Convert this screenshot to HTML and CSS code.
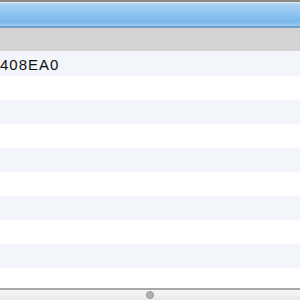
FILE: index.html
```html
<!DOCTYPE html>
<html lang="en">
<head>
    <meta charset="UTF-8">
    <title>Memory View</title>
    <link rel="stylesheet" href="styles.css">
</head>
<body>
    <div class="window">
        <div class="titlebar"></div>
        <div class="column-header"></div>
        <div class="rows">
            <div class="row"><span class="cell">408EA0</span></div>
            <div class="row"></div>
            <div class="row"></div>
            <div class="row"></div>
            <div class="row"></div>
            <div class="row"></div>
            <div class="row"></div>
            <div class="row"></div>
            <div class="row"></div>
            <div class="row"></div>
        </div>
        <div class="scrollbar">
            <span class="knob"></span>
        </div>
    </div>
</body>
</html>
```

FILE: styles.css
```css
body {
  margin: 0;
  font-family: "Liberation Sans", Arial, sans-serif;
  background: #ffffff;
}
.window {
  width: 300px;
  height: 300px;
  display: flex;
  flex-direction: column;
  overflow: hidden;
}
.titlebar {
  height: 24px;
  flex: none;
  border-top: 2px solid #8a8a8a;
  border-bottom: 2px solid #6f9fc8;
  background: linear-gradient(#c8dff3 0, #a9d0f3 3px, #8cc2f0 12px, #7db9ec 20px, #9ccaf0 24px);
  box-shadow: inset 0 1px 0 #e4e4e4;
}
.column-header {
  height: 23px;
  flex: none;
  background: #d3d3d3;
  border-bottom: 1px solid #f7f7f7;
}
.rows {
  flex: 1;
  overflow: hidden;
}
.row {
  height: 24px;
  display: flex;
  align-items: center;
  background: #ffffff;
}
.row:nth-child(odd) {
  background: #f2f5fa;
}
.cell {
  font-size: 15px;
  letter-spacing: 1px;
  color: #111111;
  white-space: nowrap;
}
.scrollbar {
  height: 10px;
  flex: none;
  border-top: 2px solid #a8a8a8;
  background: linear-gradient(#f6f6f6, #e9e9e9);
  display: flex;
  justify-content: center;
  align-items: center;
}
.knob {
  width: 6px;
  height: 6px;
  border-radius: 50%;
  background: #b0b0b0;
  border: 1px solid #999999;
}
```
